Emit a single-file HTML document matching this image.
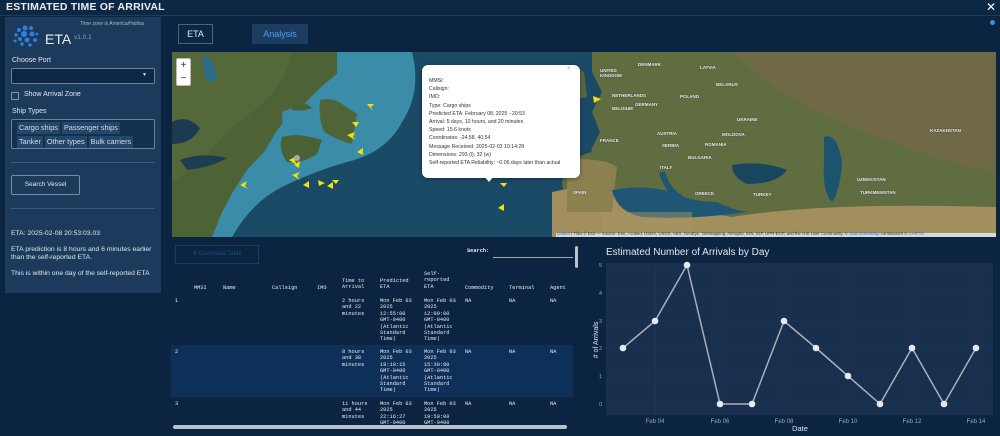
<!DOCTYPE html>
<html><head><meta charset="utf-8"><style>
*{margin:0;padding:0;box-sizing:border-box}
body{width:1000px;height:436px;overflow:hidden;background:#0a2441;font-family:"Liberation Sans",sans-serif;color:#dfe6ee;position:relative}
.a{position:absolute}
.mono{font-family:"Liberation Mono",monospace;font-size:5.3px;line-height:6.4px;color:#e8edf2}
.tag{display:inline-block;background:#24466b;padding:1px 2px;margin:1px;font-size:7.3px;color:#d5dde6}
.lbl{position:absolute;font-size:4.5px;color:#eee;font-weight:bold;text-shadow:0 0 1px #333}
</style></head><body>
<div class="a" style="left:0;top:0;width:1000px;height:16px;background:#0d2845;border-bottom:1px solid #1f3b5a"></div>
<div class="a" style="left:6px;top:1px;font-size:10.5px;font-weight:bold;color:#e9eef4;letter-spacing:0.2px">ESTIMATED TIME OF ARRIVAL</div>
<div class="a" style="left:986px;top:0px;font-size:12px;color:#fff">✕</div>
<div class="a" style="left:990px;top:20px;width:5px;height:5px;border-radius:50%;background:#3a8ee6"></div>

<div class="a" style="left:5px;top:17px;width:156px;height:276px;background:#1c3b5c"></div>
<div class="a" style="left:80px;top:21px;font-size:5px;color:#aab7c5">Time zone is America/Halifax</div>
<svg class="a" style="left:11px;top:24px" width="28" height="24" viewBox="0 0 28 24"><g fill="#2f7fe0"><circle cx="14" cy="4" r="2.5"/><circle cx="20" cy="4" r="2"/><circle cx="8" cy="6" r="2"/><circle cx="13" cy="10" r="3"/><circle cx="21" cy="10" r="2.5"/><circle cx="5" cy="11" r="1.7"/><circle cx="9" cy="15" r="2"/><circle cx="16" cy="16" r="2.4"/><circle cx="24" cy="16" r="2"/><circle cx="4" cy="17" r="1.5"/><circle cx="11" cy="20" r="1.7"/><circle cx="19" cy="21" r="1.7"/><circle cx="26" cy="10" r="1.4"/></g></svg>
<div class="a" style="left:45px;top:31px;font-size:14px;color:#e8eef4">ETA</div>
<div class="a" style="left:74px;top:34px;font-size:6.5px;color:#8a9bb0">v1.0.1</div>
<div class="a" style="left:12px;top:57px;font-size:7px">Choose Port</div>
<div class="a" style="left:11px;top:68px;width:144px;height:16px;background:#0c2744;border:1px solid #6b7f96;border-radius:2px"></div>
<div class="a" style="left:142px;top:72px;font-size:5px;color:#ddd">▼</div>
<div class="a" style="left:11px;top:92px;width:8px;height:8px;border:1px solid #8898aa;border-radius:1px"></div>
<div class="a" style="left:24px;top:91px;font-size:7px">Show Arrival Zone</div>
<div class="a" style="left:12px;top:108px;font-size:7px">Ship Types</div>
<div class="a" style="left:11px;top:119px;width:144px;height:30px;border:1px solid #6b7f96;border-radius:2px;padding:1px 4px;line-height:10px;background:#14304f"><span class="tag">Cargo ships</span><span class="tag">Passenger ships</span><br><span class="tag">Tanker</span><span class="tag">Other types</span><span class="tag">Bulk carriers</span></div>
<div class="a" style="left:11px;top:162px;width:144px;height:1px;background:#3d5875"></div>
<div class="a" style="left:11px;top:175px;width:69px;height:20px;border:1px solid #7a8ca1;border-radius:2px;font-size:6.5px;text-align:center;line-height:18px">Search Vessel</div>
<div class="a" style="left:11px;top:208px;width:144px;height:1px;background:#3d5875"></div>
<div class="a" style="left:11px;top:230px;font-size:6.8px;line-height:8px;width:148px">ETA: 2025-02-08 20:53:03.03<br><br style="line-height:4px">ETA prediction is 8 hours and 6 minutes earlier than the self-reported ETA.<br><br style="line-height:4px">This is within one day of the self-reported ETA</div>

<div class="a" style="left:178px;top:24px;width:35px;height:20px;border:1px solid #4a6580;background:#0c2744;font-size:9px;text-align:center;line-height:18px">ETA</div>
<div class="a" style="left:252px;top:24px;width:56px;height:20px;background:#1d3d60;font-size:9px;text-align:center;line-height:20px;color:#4aa0f0">Analysis</div>

<svg class="a" style="left:172px;top:52px" width="824" height="185" viewBox="0 0 824 185">
<rect width="824" height="185" fill="#1a4a66"/>
<!-- continental shelf -->
<path d="M0 0H240Q250 40 230 70Q215 100 175 110Q140 120 110 135Q80 150 60 185H0Z" fill="#3a8ca8"/>
<!-- North America -->
<path d="M0 0H165V22L150 34L132 52L116 64L104 80L92 100L75 118L62 138L50 160L40 185H0Z" fill="#4d6336"/>
<path d="M0 0H120Q110 40 80 60Q50 80 30 110L0 130Z" fill="#56693c" opacity=".8"/>
<path d="M110 60Q130 50 160 55L150 80Q130 90 112 88Z" fill="#3a8ca8"/>
<path d="M148 48Q160 45 170 52L185 62L180 92Q165 88 152 80Q146 65 148 48Z" fill="#4f6538"/>
<path d="M110 85Q125 80 150 88L145 102Q130 112 115 110Q106 98 110 85Z" fill="#4a6135"/>
<path d="M120 52Q132 48 140 56Q130 60 120 58Z" fill="#4a6135"/>
<path d="M0 70Q15 62 28 76Q20 92 0 92Z" fill="#1c3a50"/>
<path d="M8 108Q30 100 55 106Q40 115 15 118Z" fill="#1d3d52"/>
<path d="M30 5Q40 0 45 25Q40 35 33 25Z" fill="#2c6c8a"/>
<!-- Europe/Asia -->
<path d="M420 0H824V185H380V168L395 160L390 130L395 110L418 100L428 80L420 60L430 40L420 20Z" fill="#5f6d40"/>
<path d="M560 0H824V120Q770 110 720 90Q660 70 610 40Q580 20 560 0Z" fill="#6f6a45"/>
<path d="M385 18Q400 10 412 20L415 45Q400 50 388 40Z" fill="#56683b"/>
<path d="M380 140Q420 130 470 142Q500 150 530 160L560 165Q650 150 824 155V185H380Z" fill="#a38e5e"/>
<path d="M395 108Q430 105 445 115L440 160L395 160Z" fill="#8c8050"/>
<path d="M440 138Q470 132 500 140Q520 150 545 150Q560 158 575 160Q520 168 470 165Q445 160 440 138Z" fill="#1e5674"/>
<path d="M490 120Q495 140 515 150" stroke="#1e5674" stroke-width="6" fill="none"/>
<path d="M560 113Q590 108 615 118Q605 132 575 132Q560 125 560 113Z" fill="#18465f"/>
<path d="M652 85Q665 80 670 110Q668 140 660 150Q650 140 652 110Z" fill="#1c5470"/>
<path d="M400 85Q415 80 420 100L400 105Z" fill="#1a4a66"/>
<path d="M430 160H520V185H430Z" fill="#a89567" opacity=".5"/>
<rect x="384" y="181" width="440" height="4" fill="#dfe6ee" opacity=".85"/>
<g fill="#f2e300">
<path d="M68 133l7 -4l-2 5l3 3z"/><path d="M120 123l8 -3l-3 4l3 4z"/><path d="M185 100l6 -4l0 7z"/><path d="M175 83l8 -3l-2 5l2 3z"/><path d="M195 52l7 0l-3 3l2 4z"/><path d="M131 133l6 -4l0 7z"/><path d="M146 128l7 3l-6 3z"/><path d="M155 134l6 -4l0 7z"/><path d="M160 128l7 0l-3 4z"/><path d="M187 70l-7 0l4 5z"/><path d="M117 108l8 -4l-2 5l2 4z"/><path d="M122 113l6 -4l-1 7z"/><path d="M328 131l7 0l-3 4z"/><path d="M326 156l6 -4l0 7z"/><path d="M421 44l8 3l-7 4z"/>
</g>
<circle cx="125" cy="106" r="3" fill="#aaa"/>
</svg>
<div class="a" style="left:176px;top:58px;width:15px;height:28px;background:#fff;border:1px solid #bbb;border-radius:2px;color:#333;font-size:10px;text-align:center;line-height:13px">+<br>−</div>
<div class="lbl" style="left:600px;top:68px">UNITED<br>KINGDOM</div><div class="lbl" style="left:638px;top:62px">DENMARK</div><div class="lbl" style="left:700px;top:65px">LATVIA</div><div class="lbl" style="left:716px;top:82px">BELARUS</div><div class="lbl" style="left:680px;top:94px">POLAND</div><div class="lbl" style="left:612px;top:93px">NETHERLANDS</div><div class="lbl" style="left:635px;top:102px">GERMANY</div><div class="lbl" style="left:612px;top:106px">BELGIUM</div><div class="lbl" style="left:737px;top:117px">UKRAINE</div><div class="lbl" style="left:600px;top:138px">FRANCE</div><div class="lbl" style="left:657px;top:131px">AUSTRIA</div><div class="lbl" style="left:722px;top:132px">MOLDOVA</div><div class="lbl" style="left:705px;top:142px">ROMANIA</div><div class="lbl" style="left:662px;top:143px">SERBIA</div><div class="lbl" style="left:688px;top:155px">BULGARIA</div><div class="lbl" style="left:660px;top:165px">ITALY</div><div class="lbl" style="left:573px;top:190px">SPAIN</div><div class="lbl" style="left:753px;top:192px">TURKEY</div><div class="lbl" style="left:695px;top:191px">GREECE</div><div class="lbl" style="left:857px;top:177px">UZBEKISTAN</div><div class="lbl" style="left:860px;top:190px">TURKMENISTAN</div><div class="lbl" style="left:930px;top:128px">KAZAKHSTAN</div>
<div class="a" style="left:557px;top:231px;font-size:4.3px;color:#333;white-space:nowrap"><span style="color:#2a6ec0">Leaflet</span> | Tiles © Esri — Source: Esri, i-cubed, USDA, USGS, AEX, GeoEye, Getmapping, Aerogrid, IGN, IGP, UPR-EGP, and the GIS User Community, © <span style="color:#2a6ec0">OpenStreetMap</span> contributors © <span style="color:#2a6ec0">CARTO</span></div>
<div class="a" style="left:422px;top:65px;width:158px;height:113px;background:#fff;border-radius:6px;box-shadow:0 1px 4px rgba(0,0,0,.4)"></div>
<div class="a" style="left:567px;top:66px;font-size:6px;color:#999">×</div>
<div class="a" style="left:484px;top:176px;width:0;height:0;border-left:5px solid transparent;border-right:5px solid transparent;border-top:6px solid #fff"></div>
<div class="a" style="left:429px;top:77px;font-size:5.2px;line-height:8.2px;color:#333;width:145px">MMSI:<br>Callsign:<br>IMO:<br>Type: Cargo ships<br>Predicted ETA: February 08, 2025 - 20:53<br>Arrival: 5 days, 10 hours, and 20 minutes<br>Speed: 15.6 knots<br>Coordinates: -24.58, 40.54<br>Message Received: 2025-02-03 10:14:28<br>Dimensions: 293 (l); 32 (w)<br>Self-reported ETA Reliability: ~0.06 days later than actual</div>

<div class="a" style="left:175px;top:245px;width:84px;height:19px;border:1px solid #1c3b63;font-size:6px;color:#1d4a80;text-align:center;line-height:17px">⬇ Download Table</div>
<div class="a mono" style="left:467px;top:248px;font-weight:bold">Search:</div>
<div class="a" style="left:493px;top:257px;width:80px;height:1px;background:#a0aab5"></div>
<div class="a" style="left:575px;top:246px;width:3px;height:22px;background:#b9c0c8;border-radius:2px"></div>
<div class="a" style="left:171px;top:345px;width:402px;height:52px;background:#0e2f58"></div>
<div class="a mono" style="left:194px;top:285px">MMSI</div><div class="a mono" style="left:223px;top:285px">Name</div><div class="a mono" style="left:272px;top:285px">Callsign</div><div class="a mono" style="left:317px;top:285px">IMO</div>
<div class="a mono" style="left:342px;top:278px">Time to<br>Arrival</div><div class="a mono" style="left:380px;top:278px">Predicted<br>ETA</div><div class="a mono" style="left:424px;top:271px">Self-<br>reported<br>ETA</div>
<div class="a mono" style="left:465px;top:285px">Commodity</div><div class="a mono" style="left:509px;top:285px">Terminal</div><div class="a mono" style="left:550px;top:285px">Agent</div>
<div class="a mono" style="left:175px;top:298px">1</div><div class="a mono" style="left:342px;top:298px">2 hours<br>and 22<br>minutes</div><div class="a mono" style="left:380px;top:298px">Mon Feb 03<br>2025<br>12:55:00<br>GMT-0400<br>(Atlantic<br>Standard<br>Time)</div><div class="a mono" style="left:424px;top:298px">Mon Feb 03<br>2025<br>12:00:00<br>GMT-0400<br>(Atlantic<br>Standard<br>Time)</div><div class="a mono" style="left:465px;top:298px">NA</div><div class="a mono" style="left:509px;top:298px">NA</div><div class="a mono" style="left:550px;top:298px">NA</div>
<div class="a mono" style="left:175px;top:349px">2</div><div class="a mono" style="left:342px;top:349px">8 hours<br>and 38<br>minutes</div><div class="a mono" style="left:380px;top:349px">Mon Feb 03<br>2025<br>19:10:15<br>GMT-0400<br>(Atlantic<br>Standard<br>Time)</div><div class="a mono" style="left:424px;top:349px">Mon Feb 03<br>2025<br>15:30:00<br>GMT-0400<br>(Atlantic<br>Standard<br>Time)</div><div class="a mono" style="left:465px;top:349px">NA</div><div class="a mono" style="left:509px;top:349px">NA</div><div class="a mono" style="left:550px;top:349px">NA</div>
<div class="a mono" style="left:175px;top:401px">3</div><div class="a mono" style="left:342px;top:401px">11 hours<br>and 44<br>minutes</div><div class="a mono" style="left:380px;top:401px">Mon Feb 03<br>2025<br>22:16:27<br>GMT-0400</div><div class="a mono" style="left:424px;top:401px">Mon Feb 03<br>2025<br>19:59:00<br>GMT-0400</div><div class="a mono" style="left:465px;top:401px">NA</div><div class="a mono" style="left:509px;top:401px">NA</div><div class="a mono" style="left:550px;top:401px">NA</div>
<div class="a" style="left:173px;top:425px;width:394px;height:4px;background:#b9c0c8;border-radius:2px"></div>

<svg class="a" style="left:580px;top:240px" width="420" height="196" viewBox="0 0 420 196" font-family="Liberation Sans">
<text x="26" y="15" font-size="10" fill="#dfe6ee">Estimated Number of Arrivals by Day</text>
<rect x="26" y="23" width="387" height="152" fill="#192f4e"/>
<g stroke="#22395a" stroke-width=".6"><line x1="26" y1="25" x2="413" y2="25"/><line x1="26" y1="53" x2="413" y2="53"/><line x1="26" y1="81" x2="413" y2="81"/><line x1="26" y1="108" x2="413" y2="108"/><line x1="26" y1="136" x2="413" y2="136"/><line x1="26" y1="164" x2="413" y2="164"/>
<line x1="75" y1="23" x2="75" y2="175"/><line x1="140" y1="23" x2="140" y2="175"/><line x1="204" y1="23" x2="204" y2="175"/><line x1="268" y1="23" x2="268" y2="175"/><line x1="332" y1="23" x2="332" y2="175"/><line x1="396" y1="23" x2="396" y2="175"/></g>
<g font-size="5.5" fill="#9aa8b8" text-anchor="end"><text x="22" y="27">5</text><text x="22" y="55">4</text><text x="22" y="83">3</text><text x="22" y="110">2</text><text x="22" y="138">1</text><text x="22" y="166">0</text></g>
<g font-size="6" fill="#9aa8b8" text-anchor="middle"><text x="75" y="183">Feb 04</text><text x="140" y="183">Feb 06</text><text x="204" y="183">Feb 08</text><text x="268" y="183">Feb 10</text><text x="332" y="183">Feb 12</text><text x="396" y="183">Feb 14</text></g>
<text x="220" y="191" font-size="7.5" fill="#dfe6ee" text-anchor="middle">Date</text>
<text transform="translate(18,100) rotate(-90)" font-size="7" fill="#dfe6ee" text-anchor="middle"># of Arrivals</text>
<polyline fill="none" stroke="#a9b0bb" stroke-width="1.5" points="43,108 75,81 107,25 140,164 172,164 204,81 236,108 268,136 300,164 332,108 364,164 396,108"/>
<g fill="#e6e9ee"><circle cx="43" cy="108" r="3.3"/><circle cx="75" cy="81" r="3.3"/><circle cx="107" cy="25" r="3.3"/><circle cx="140" cy="164" r="3.3"/><circle cx="172" cy="164" r="3.3"/><circle cx="204" cy="81" r="3.3"/><circle cx="236" cy="108" r="3.3"/><circle cx="268" cy="136" r="3.3"/><circle cx="300" cy="164" r="3.3"/><circle cx="332" cy="108" r="3.3"/><circle cx="364" cy="164" r="3.3"/><circle cx="396" cy="108" r="3.3"/></g>
</svg>
</body></html>
